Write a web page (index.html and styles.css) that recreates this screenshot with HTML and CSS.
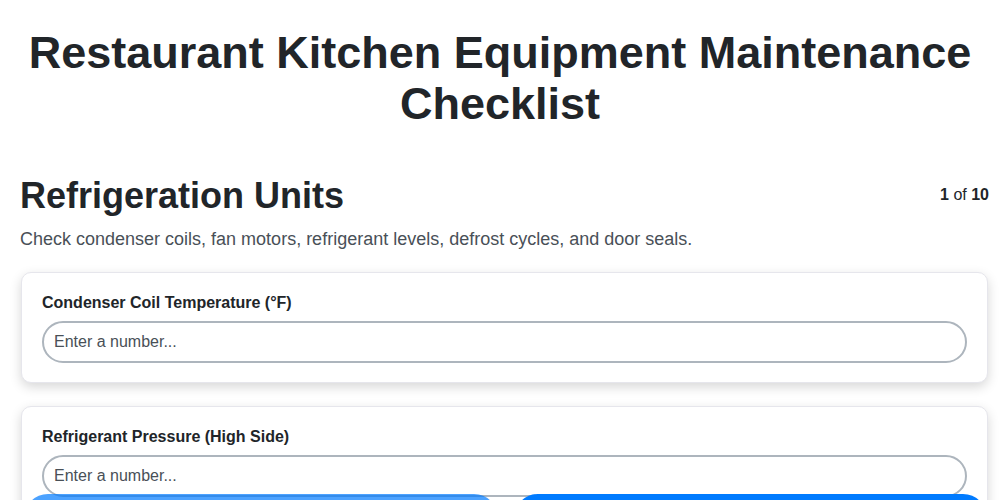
FILE: index.html
```html
<!DOCTYPE html>
<html lang="en">
<head>
<meta charset="utf-8">
<title>Restaurant Kitchen Equipment Maintenance Checklist</title>
<link rel="stylesheet" href="styles.css">
</head>
<body>
<header class="header">
  <h1 class="title">Restaurant Kitchen Equipment Maintenance Checklist</h1>
</header>
<main class="step">
  <div class="step-head">
    <h2 class="step-title">Refrigeration Units</h2>
    <div class="step-count"><b>1</b> of <b>10</b></div>
  </div>
  <p class="step-desc">Check condenser coils, fan motors, refrigerant levels, defrost cycles, and door seals.</p>
  <div class="cards">
    <div class="card">
      <label class="field-label">Condenser Coil Temperature (°F)</label>
      <input class="field-input" type="text" placeholder="Enter a number...">
    </div>
    <div class="card">
      <label class="field-label">Refrigerant Pressure (High Side)</label>
      <input class="field-input" type="text" placeholder="Enter a number...">
    </div>
  </div>
</main>
<nav class="nav">
  <button class="btn btn-prev" disabled>Previous</button>
  <button class="btn btn-next">Next</button>
</nav>
</body>
</html>
```
FILE: styles.css
```css
* { box-sizing: border-box; }
html, body { margin: 0; padding: 0; background: #fff; }
body {
  font-family: "Liberation Sans", Arial, sans-serif;
  color: #212529;
}
.header {
  padding: 28px 20px 0;
}
.title {
  margin: 0 0 44px;
  font-size: 45px;
  line-height: 1.13;
  font-weight: 700;
  text-align: center;
  color: #212529;
}
.step {
  padding: 0 11px 80px 20px;
}
.step-head {
  display: flex;
  justify-content: space-between;
  align-items: flex-start;
}
.step-title {
  margin: 0;
  font-size: 36px;
  line-height: 44px;
  font-weight: 700;
}
.step-count {
  font-size: 16px;
  margin-top: 12px;
  color: #212529;
}
.step-desc {
  margin: 9px 0 21px;
  font-size: 18px;
  line-height: 24px;
  color: #495057;
}
.cards {
  display: flex;
  flex-direction: column;
  gap: 23px;
  padding: 0 1px;
}
.card {
  background: #fff;
  border: 1px solid #e6e6ec;
  border-radius: 10px;
  padding: 20px 20px 19px;
  box-shadow: 0 4px 12px rgba(0,0,0,0.16);
  display: flex;
  flex-direction: column;
}
.field-label {
  font-size: 16px;
  font-weight: 700;
  line-height: 20px;
  margin-bottom: 8px;
  color: #212529;
}
.field-input {
  height: 42px;
  border: 2px solid #adb5bd;
  border-radius: 21px;
  padding: 0 10px;
  font-family: "Liberation Sans", Arial, sans-serif;
  font-size: 16px;
  color: #212529;
  background: #fff;
  outline: none;
}
.field-input::placeholder { color: #495057; }
.nav {
  position: fixed;
  left: 24px;
  right: 13px;
  bottom: -56px;
  display: flex;
  gap: 16px;
}
.btn {
  flex: 1;
  height: 62px;
  padding-top: 16px;
  border: none;
  border-radius: 24px;
  background: #007bff;
  color: #fff;
  font-family: "Liberation Sans", Arial, sans-serif;
  font-size: 18px;
  font-weight: 700;
}
.btn-prev { opacity: 0.7; }
```
